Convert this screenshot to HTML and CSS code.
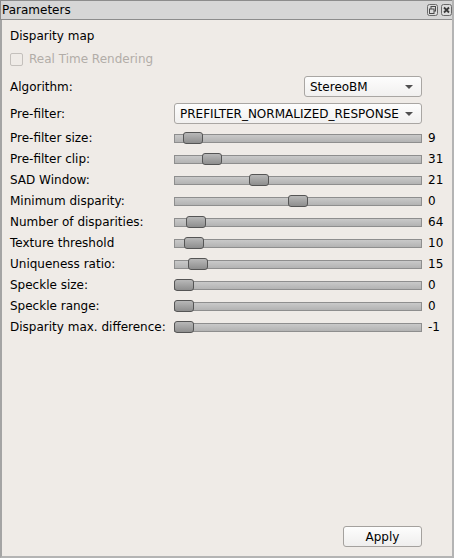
FILE: index.html
```html
<!DOCTYPE html>
<html>
<head>
<meta charset="utf-8">
<link rel="stylesheet" href="styles.css">
</head>
<body>
<div class="window">
  <div class="titlebar">
    <span class="title">Parameters</span>
    <div class="tb-buttons">
      <svg class="tb-btn" width="11" height="12" viewBox="0 0 11 12">
        <rect x="0.5" y="0.5" width="10" height="11" rx="2" fill="#dcdcdc" stroke="#6a6a6a"/>
        <rect x="4" y="2.5" width="4.5" height="4.5" fill="none" stroke="#4a4a4a"/>
        <rect x="2.5" y="5" width="4.5" height="4.5" fill="#dcdcdc" stroke="#4a4a4a"/>
      </svg>
      <svg class="tb-btn" width="11" height="12" viewBox="0 0 11 12">
        <rect x="0.5" y="0.5" width="10" height="11" rx="2" fill="#dcdcdc" stroke="#6a6a6a"/>
        <path d="M3 3.5 L8 8.5 M8 3.5 L3 8.5" stroke="#3a3a3a" stroke-width="1.8"/>
      </svg>
    </div>
  </div>
  <div class="content">
    <div class="heading">Disparity map</div>
    <div class="check-row">
      <span class="checkbox"></span>
      <span class="disabled">Real Time Rendering</span>
    </div>
    <div class="row combo-row algo">
      <span class="label">Algorithm:</span>
      <div class="combo combo-small"><span>StereoBM</span><span class="arrow"></span></div>
      <span></span>
    </div>
    <div class="row combo-row pref">
      <span class="label">Pre-filter:</span>
      <div class="combo"><span>PREFILTER_NORMALIZED_RESPONSE</span><span class="arrow"></span></div>
      <span></span>
    </div>
    <div class="sliders">
      <div class="row slider-row"><span class="label">Pre-filter size:</span><div class="groove"><div class="handle" style="left:9px"></div></div><span class="value">9</span></div>
      <div class="row slider-row"><span class="label">Pre-filter clip:</span><div class="groove"><div class="handle" style="left:28px"></div></div><span class="value">31</span></div>
      <div class="row slider-row"><span class="label">SAD Window:</span><div class="groove"><div class="handle" style="left:75px"></div></div><span class="value">21</span></div>
      <div class="row slider-row"><span class="label">Minimum disparity:</span><div class="groove"><div class="handle" style="left:114px"></div></div><span class="value">0</span></div>
      <div class="row slider-row"><span class="label">Number of disparities:</span><div class="groove"><div class="handle" style="left:12px"></div></div><span class="value">64</span></div>
      <div class="row slider-row"><span class="label">Texture threshold</span><div class="groove"><div class="handle" style="left:10px"></div></div><span class="value">10</span></div>
      <div class="row slider-row"><span class="label">Uniqueness ratio:</span><div class="groove"><div class="handle" style="left:14px"></div></div><span class="value">15</span></div>
      <div class="row slider-row"><span class="label">Speckle size:</span><div class="groove"><div class="handle" style="left:0px"></div></div><span class="value">0</span></div>
      <div class="row slider-row"><span class="label">Speckle range:</span><div class="groove"><div class="handle" style="left:0px"></div></div><span class="value">0</span></div>
      <div class="row slider-row"><span class="label">Disparity max. difference:</span><div class="groove"><div class="handle" style="left:0px"></div></div><span class="value">-1</span></div>
    </div>
    <div class="spacer"></div>
    <div class="row button-row">
      <span></span>
      <button class="btn">Apply</button>
      <span></span>
    </div>
  </div>
</div>
</body>
</html>
```

FILE: styles.css
```css
html, body {
  margin: 0;
  padding: 0;
  background: #efebe7;
}
body {
  font-family: "DejaVu Sans", sans-serif;
  font-size: 12px;
  color: #000;
}
.window {
  width: 454px;
  height: 558px;
  box-sizing: border-box;
  border-left: 2px solid #a4a4a4;
  border-right: 2px solid #b4b4b4;
  border-bottom: 2px solid #b4b4b4;
  display: flex;
  flex-direction: column;
  background: #efebe7;
}
.titlebar {
  height: 20px;
  box-sizing: border-box;
  border-top: 1px solid #8c8c8c;
  border-bottom: 1px solid #8c8c8c;
  background: #d6d6d6;
  display: flex;
  align-items: center;
  justify-content: space-between;
  padding-left: 1px;
  margin-left: -2px;
  border-left: 1px solid #8c8c8c;
}
.title {
  line-height: 16px;
}
.tb-buttons {
  display: flex;
  gap: 3px;
  padding-right: 0px;
  align-self: flex-start;
  padding-top: 3px;
}
.tb-btn {
  display: block;
}
.content {
  flex: 1;
  display: flex;
  flex-direction: column;
  padding: 6px 0 9px 8px;
}
.heading {
  height: 20px;
  line-height: 20px;
}
.check-row {
  height: 20px;
  margin-top: 3px;
  display: flex;
  align-items: center;
  gap: 6px;
}
.checkbox {
  width: 11px;
  height: 11px;
  border: 1px solid #c4c0bc;
  border-radius: 2px;
  background: #efebe7;
  margin-top: 1px;
}
.disabled {
  color: #b2ada8;
}
.row {
  display: grid;
  grid-template-columns: 164px 248px 30px;
  align-items: center;
}
.combo-row {
  height: 21px;
}
.algo {
  margin-top: 7px;
}
.pref {
  margin-top: 6px;
}
.combo {
  height: 21px;
  box-sizing: border-box;
  border: 1px solid #a9a6a3;
  border-radius: 3px;
  background: linear-gradient(#fdfdfd, #f1f0ef);
  display: flex;
  align-items: center;
  justify-content: space-between;
  padding: 0 8px 0 5px;
}
.combo-small {
  width: 118px;
  justify-self: end;
}
.arrow {
  width: 0;
  height: 0;
  border-left: 4px solid transparent;
  border-right: 4px solid transparent;
  border-top: 4px solid #505050;
}
.sliders {
  margin-top: 3px;
  display: flex;
  flex-direction: column;
}
.slider-row {
  height: 21px;
}
.groove {
  position: relative;
  height: 9px;
  box-sizing: border-box;
  border: 1px solid #8e8e8e;
  background: linear-gradient(#c9c9c9, #b3b3b3);
  margin-top: 1px;
}
.handle {
  position: absolute;
  top: -3px;
  width: 20px;
  height: 12px;
  box-sizing: border-box;
  border: 1px solid #555;
  border-radius: 3px;
  background: linear-gradient(#b8b8b8, #8e8e8e);
  margin-left: -1px;
}
.value {
  padding-left: 6px;
}
.spacer {
  flex: 1;
}
.button-row {
  height: 21px;
}
.btn {
  justify-self: end;
  width: 79px;
  height: 21px;
  box-sizing: border-box;
  border: 1px solid #a4a19e;
  border-radius: 3px;
  background: linear-gradient(#fdfdfd, #efeeed);
  font-family: "DejaVu Sans", sans-serif;
  font-size: 12px;
  color: #000;
  padding: 0;
}
```
